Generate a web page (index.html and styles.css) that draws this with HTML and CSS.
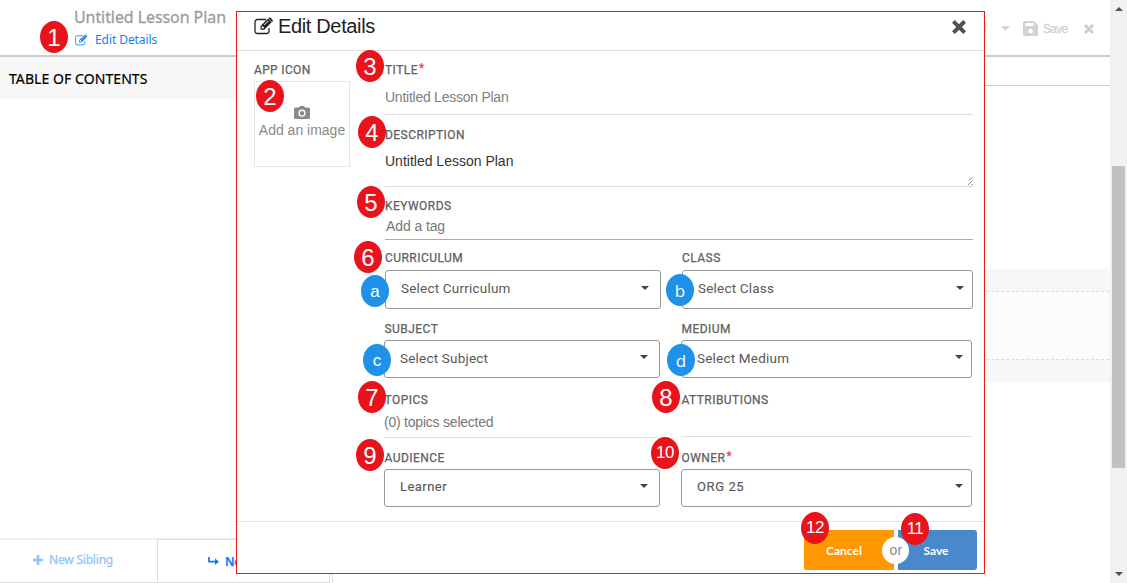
FILE: index.html
```html
<!DOCTYPE html>
<html lang="en">
<head>
<meta charset="utf-8">
<title>Untitled Lesson Plan</title>
<link rel="stylesheet" href="styles.css">
</head>
<body>
<svg width="0" height="0" class="defs">
  <symbol id="edit" viewBox="0 0 20 18"><path d="M15 11v3a2.500 2.500 0 0 1-2.500 2.500h-9A2.500 2.500 0 0 1 1 14V5a2.500 2.500 0 0 1 2.500-2.500H12" fill="none" stroke="currentColor" stroke-width="1.300"/><path fill="currentColor" fill-rule="evenodd" d="M6.500 9 14 1.600l3.600 3.600-7.400 7.500H6.500zM7.600 9.700v1.800h1.800l.8-.8-1.800-1.800zm2.300-2 4.300-4.200.5.500-4.200 4.300zM14.800.8c.5-.5 1.200-.5 1.700 0l2 2c.5.500.5 1.200 0 1.700l-.5.500-3.600-3.700z"/></symbol>
  <symbol id="cross" viewBox="0 0 14 14"><path d="M2.800 2.800l8.400 8.400M11.200 2.800l-8.400 8.400" stroke="currentColor" stroke-width="4" stroke-linecap="square"/></symbol>
  <symbol id="caret" viewBox="0 0 8 4"><path d="M0 0h8L4 4z" fill="currentColor"/></symbol>
</svg>
<div class="app">
  <div class="page">
    <header class="topbar">
      <div class="lesson">
        <h1 class="lesson-title">Untitled Lesson Plan</h1>
        <a class="edit-link"><svg class="edit-sm"><use href="#edit"/></svg><span>Edit Details</span></a>
      </div>
      <div class="actions">
        <svg class="slash" viewBox="0 0 3 12"><path d="M2.500 0 .5 12" stroke="currentColor" stroke-width="1"/></svg>
        <svg class="act-caret"><use href="#caret"/></svg>
        <svg class="disk" viewBox="0 0 15 15"><path fill="currentColor" fill-rule="evenodd" d="M1.500 0H11l4 4v9.500a1.500 1.500 0 0 1-1.500 1.500h-12A1.500 1.500 0 0 1 0 13.500v-12A1.500 1.500 0 0 1 1.500 0zM2.200 2v3h8.300V2zM7.500 8a2.300 2.300 0 1 0 0 4.600 2.300 2.300 0 0 0 0-4.600z"/></svg>
        <span class="act-save">Save</span>
        <svg class="act-close"><use href="#cross"/></svg>
      </div>
    </header>
    <div class="workspace">
      <aside class="sidebar">
        <h2 class="toc">TABLE OF CONTENTS</h2>
        <div class="toc-buttons">
          <button class="sibling"><svg viewBox="0 0 10 10"><path d="M5 0v10M0 5h10" stroke="currentColor" stroke-width="2.600"/></svg><span>New Sibling</span></button>
          <button class="child"><svg viewBox="0 0 11 8"><path d="M1 0v4.700h7" fill="none" stroke="currentColor" stroke-width="1.700"/><path d="M7 1.500 11 4.700 7 8z" fill="currentColor"/></svg><span>New Child</span></button>
        </div>
      </aside>
      <main class="canvas">
        <div class="toolbar"></div>
        <div class="band"><div class="drop"></div></div>
      </main>
    </div>
  </div>
  <div class="scrollbar"><svg class="up"><use href="#caret"/></svg><div class="thumb"></div><svg class="down"><use href="#caret"/></svg></div>
</div>

<section class="modal">
  <header class="modal-head">
    <svg class="edit-lg"><use href="#edit"/></svg>
    <h2>Edit Details</h2>
    <svg class="close"><use href="#cross"/></svg>
  </header>
  <div class="modal-body">
    <div class="icon-col">
      <div class="label app-label">APP ICON</div>
      <div class="upload">
        <svg viewBox="0 0 16 13"><path fill="currentColor" fill-rule="evenodd" d="M5 1.500 5.600.4Q5.900 0 6.400 0h3.200q.5 0 .8.4l.6 1.100h3.200Q16 1.500 16 3v8.500q0 1.500-1.500 1.500h-13Q0 13 0 11.500V3q0-1.500 1.500-1.500zM8 3.600a3.600 3.600 0 1 0 0 7.200 3.600 3.600 0 0 0 0-7.200zm0 1.400a2.200 2.200 0 1 1 0 4.400A2.200 2.200 0 0 1 8 5z"/></svg>
        <span>Add an image</span>
      </div>
    </div>
    <form class="form">
      <div class="field title"><div class="label">TITLE<b>*</b></div><div class="value">Untitled Lesson Plan</div></div>
      <div class="field desc"><div class="label">DESCRIPTION</div><div class="value">Untitled Lesson Plan</div><svg class="grip" viewBox="0 0 6 9"><path d="M1 8 5.500 3.500M2 3.500 5 .5M4 8.500 5.500 7" stroke="#777" stroke-width=".9"/></svg></div>
      <div class="field keys"><div class="label">KEYWORDS</div><div class="value">Add a tag</div></div>
      <div class="row r1">
        <div><div class="label">CURRICULUM</div><div class="select narrow"><span>Select Curriculum</span><svg><use href="#caret"/></svg></div></div>
        <div><div class="label">CLASS</div><div class="select"><span>Select Class</span><svg><use href="#caret"/></svg></div></div>
      </div>
      <div class="row r2">
        <div><div class="label">SUBJECT</div><div class="select narrow"><span>Select Subject</span><svg><use href="#caret"/></svg></div></div>
        <div><div class="label">MEDIUM</div><div class="select"><span>Select Medium</span><svg><use href="#caret"/></svg></div></div>
      </div>
      <div class="row r3">
        <div class="topics"><div class="label">TOPICS</div><div class="value">(0) topics selected</div></div>
        <div class="attr"><div class="label">ATTRIBUTIONS</div></div>
      </div>
      <div class="row r4">
        <div><div class="label">AUDIENCE</div><div class="select narrow"><span class="picked">Learner</span><svg><use href="#caret"/></svg></div></div>
        <div><div class="label">OWNER<b>*</b></div><div class="select"><span class="picked org">ORG 25</span><svg><use href="#caret"/></svg></div></div>
      </div>
    </form>
  </div>
  <footer class="modal-foot">
    <button class="cancel">Cancel</button><button class="save">Save</button>
    <span class="or">or</span>
  </footer>
</section>

<div class="markers">
  <span class="mark m1">1</span><span class="mark m2">2</span><span class="mark m3">3</span><span class="mark m4">4</span>
  <span class="mark m5">5</span><span class="mark m6">6</span><span class="mark m7">7</span><span class="mark m8">8</span>
  <span class="mark m9">9</span><span class="mark small m10">10</span><span class="mark small m11">11</span><span class="mark small m12">12</span>
  <span class="mark blue ma">a</span><span class="mark blue open mb">b</span><span class="mark blue mc">c</span><span class="mark blue open md">d</span>
</div>
</body>
</html>
```

FILE: styles.css
```css
* { box-sizing: border-box; }
body { margin: 0; width: 1127px; height: 583px; overflow: hidden; position: relative; background: #fff; font-family: "Liberation Sans", Arial, sans-serif; }
h1, h2 { margin: 0; font-weight: 400; }
button { border: 0; background: none; padding: 0; }
svg { display: block; flex: none; }
.defs { position: absolute; }
span, .label, .value, h1, h2 { white-space: nowrap; }

/* Page behind the dialog */
.app { display: flex; height: 583px; }
.page { width: 1110px; display: flex; flex-direction: column; }
.topbar { height: 57px; border-bottom: 2px solid #ccc; display: flex; justify-content: space-between; }
.lesson { padding: 6px 0 0 74px; }
.lesson-title { font-family: "Noto Sans", sans-serif; font-size: 16px; line-height: 23px; color: #9c9c9c; letter-spacing: -.08px; -webkit-text-stroke: .3px #9c9c9c; }
.edit-link { display: flex; align-items: center; gap: 7px; color: #0f83f5; font-family: "Noto Sans", sans-serif; font-size: 12px; line-height: 22px; letter-spacing: -.08px; }
.edit-sm { width: 13px; height: 12px; margin-left: 1px; }
.actions { display: flex; align-items: center; height: 55px; padding: 2px 16px 0 0; color: #d2d2d2; }
.slash { width: 3px; height: 12px; margin: 0 14px 2px 0; }
.act-caret { width: 9px; height: 5px; margin-right: 13px; }
.disk { width: 15px; height: 15px; margin-right: 5px; }
.act-save { font-size: 12px; letter-spacing: -.7px; width: 26px; margin-right: 15px; -webkit-text-stroke: .3px #d2d2d2; }
.act-close { width: 10px; height: 10px; color: #cdcdcd; }
.workspace { flex: 1; display: flex; }
.sidebar { width: 333px; border-right: 1px solid #ddd; display: flex; flex-direction: column; justify-content: space-between; }
.toc { height: 42px; line-height: 44px; padding-left: 9px; background: #f7f7f7; color: #000; font-family: "Noto Sans", sans-serif; font-size: 14px; letter-spacing: .07px; -webkit-text-stroke: .2px #000; }
.toc-buttons { display: flex; height: 45px; border-top: 1px solid #eee; }
.toc-buttons button { display: flex; align-items: center; font-family: "Noto Sans", sans-serif; font-size: 12px; height: 44px; border: 1px solid #ddd; -webkit-text-stroke: .25px currentColor; }
.toc-buttons .sibling { width: 157px; color: #8fc4fc; padding: 0 0 3px 33px; border-left: 0; border-right: 0; border-top-color: #eee; gap: 6px; letter-spacing: -.2px; }
.sibling svg { width: 10px; height: 10px; }
.toc-buttons .child { width: 173px; color: #0a7df5; padding: 0 0 0 50px; gap: 6px; font-weight: 600; letter-spacing: -.3px; }
.child svg { width: 11px; height: 8px; }
.canvas { flex: 1; }
.toolbar { height: 29px; border-bottom: 1px solid #ccc; }
.band { margin-top: 183px; height: 113px; background: #f7f7f7; padding: 22px 1px 22px 0; }
.drop { height: 69px; background: #fcfcfc; border: dashed #ddd; border-width: 1px 0; }
.scrollbar { width: 17px; background: #f1f1f1; padding: 7px 2px 0; display: flex; flex-direction: column; align-items: center; color: #505050; }
.scrollbar svg { width: 8px; height: 4px; }
.up { transform: rotate(180deg); }
.thumb { width: 13px; height: 302px; margin: 155px 0 104px; background: #c1c1c1; }

/* Dialog */
.modal { position: absolute; left: 236px; top: 11px; width: 749px; height: 563px; background: #fff; border: 1px solid #f01818; display: flex; flex-direction: column; }
.modal-head { height: 39px; border-bottom: 1px solid #dfdfdf; display: flex; align-items: center; padding: 0 18px 10px 17px; color: #222; }
.edit-lg { width: 20px; height: 18px; margin-right: 4px; }
.modal-head h2 { font-size: 20px; line-height: 24px; letter-spacing: -.35px; flex: 1; }
.close { width: 14px; height: 14px; color: #505050; margin-top: 1px; }
.modal-body { height: 470px; display: flex; gap: 35px; padding-left: 17px; }
.icon-col { width: 96px; padding-top: 10px; }
.label { height: 16px; line-height: 18px; font-size: 12px; color: #606060; -webkit-text-stroke: .25px #606060; font-family: Roboto, "Liberation Sans", sans-serif; letter-spacing: .45px; }
.app-label { letter-spacing: .35px; }
.label b { font-weight: 400; color: #f33; font-size: 12px; margin-left: 1px; line-height: 10px; vertical-align: 2px; -webkit-text-stroke: .2px #f33; }
.upload { margin-top: 4px; height: 86px; border: 1px solid #e5e5e5; display: flex; flex-direction: column; align-items: center; padding-top: 24px; color: #8a8a8a; font-size: 14px; }
.upload svg { width: 16px; height: 13px; }
.upload span { line-height: 16px; margin-top: 3px; }
.form { width: 588px; }
.value { font-size: 14px; line-height: 18px; color: #777; }
.field { border-bottom: 1px solid #ddd; }
.title { height: 64px; padding-top: 10px; }
.title .value { margin-top: 11px; letter-spacing: -.25px; color: #808080; }
.desc { height: 72px; padding-top: 11px; position: relative; }
.desc .value { margin-top: 10px; color: #333; }
.grip { position: absolute; right: 0; bottom: 0; width: 6px; height: 9px; }
.keys { height: 53px; padding-top: 10px; border-color: #aaa; }
.keys .value { margin: 4px 0 0 1px; letter-spacing: -.1px; }
.row { display: grid; grid-template-columns: 276px 291px; gap: 21px; }
.r1 { height: 69px; padding-top: 9px; }
.r1 .select { margin-top: 5px; }
.r2 { height: 70px; padding-top: 11px; }
.r3 { height: 59px; }
.r4 { height: 70px; padding-top: 11px; }
.r2, .r3, .r4 { margin-left: -1px; width: 588px; }
.r2 .label, .r3 .label, .r4 .label { padding-left: .5px; }
.select { height: 39px; margin-top: 4px; border: 1px solid #999; border-radius: 3px; display: flex; justify-content: space-between; align-items: center; padding: 0 8px 3px 15px; font: 13.500px/18px Roboto, sans-serif; letter-spacing: .2px; color: #585858; }
.r2 .select, .r4 .select { height: 38px; }
.narrow { padding-right: 11px; }
.select svg { width: 8px; height: 4px; margin-top: -1px; color: #444; }
.picked { font-size: 13px; letter-spacing: .45px; margin-top: 1px; -webkit-text-stroke: .15px #585858; }
.org { letter-spacing: .6px; }
.topics { height: 59px; border-bottom: 1px solid #ddd; padding-top: 12px; }
.topics .value { margin-top: 6px; letter-spacing: -.22px; }
.attr { height: 58px; border-bottom: 1px solid #ddd; padding-top: 12px; }
.modal-foot { border-top: 1px solid #e4e4e4; height: 52px; display: flex; justify-content: flex-end; gap: 4px; padding: 8px 7px 0 0; position: relative; }
.modal-foot button { height: 40px; color: #fff; font-family: Lato, sans-serif; font-weight: 700; font-size: 12px; }
.modal-foot .cancel { width: 90px; background: #ff9800; border-radius: 2px 0 0 2px; padding-right: 10px; }
.modal-foot .save { width: 79px; background: #4a88cc; border-radius: 0 3px 3px 0; padding-right: 3px; }
.or { position: absolute; left: 645px; top: 15px; width: 27px; height: 27px; border-radius: 50%; background: #fff; color: #888; font: 14px/27px "Liberation Sans", sans-serif; letter-spacing: .4px; padding-left: 1px; text-align: center; }

/* Numbered callouts over the interface */
.mark { position: absolute; width: 28px; height: 32px; border-radius: 50%; background: #e9131b; color: #fff; font-size: 24px; line-height: 33px; text-align: center; }
.small { font-size: 17px; letter-spacing: -.5px; line-height: 32px; }
.blue { background: #1e91e8; font-size: 17px; line-height: 34px; }
.open { font-family: "Open Sans", sans-serif; font-size: 17px; line-height: 33px; }
.m1 { left: 40px; top: 21px; }
.m2 { left: 256px; top: 80px; }
.m3 { left: 356px; top: 50px; }
.m4 { left: 358px; top: 116px; }
.m5 { left: 357px; top: 186px; }
.m6 { left: 354px; top: 241px; }
.m7 { left: 358px; top: 381px; }
.m8 { left: 652px; top: 381px; }
.m9 { left: 356px; top: 439px; }
.m10 { left: 651px; top: 437px; }
.m11 { left: 901px; top: 513px; }
.m12 { left: 801px; top: 512px; }
.ma { left: 361px; top: 275px; }
.mb { left: 666px; top: 274px; }
.mc { left: 363px; top: 344px; }
.md { left: 667px; top: 344px; }
```
